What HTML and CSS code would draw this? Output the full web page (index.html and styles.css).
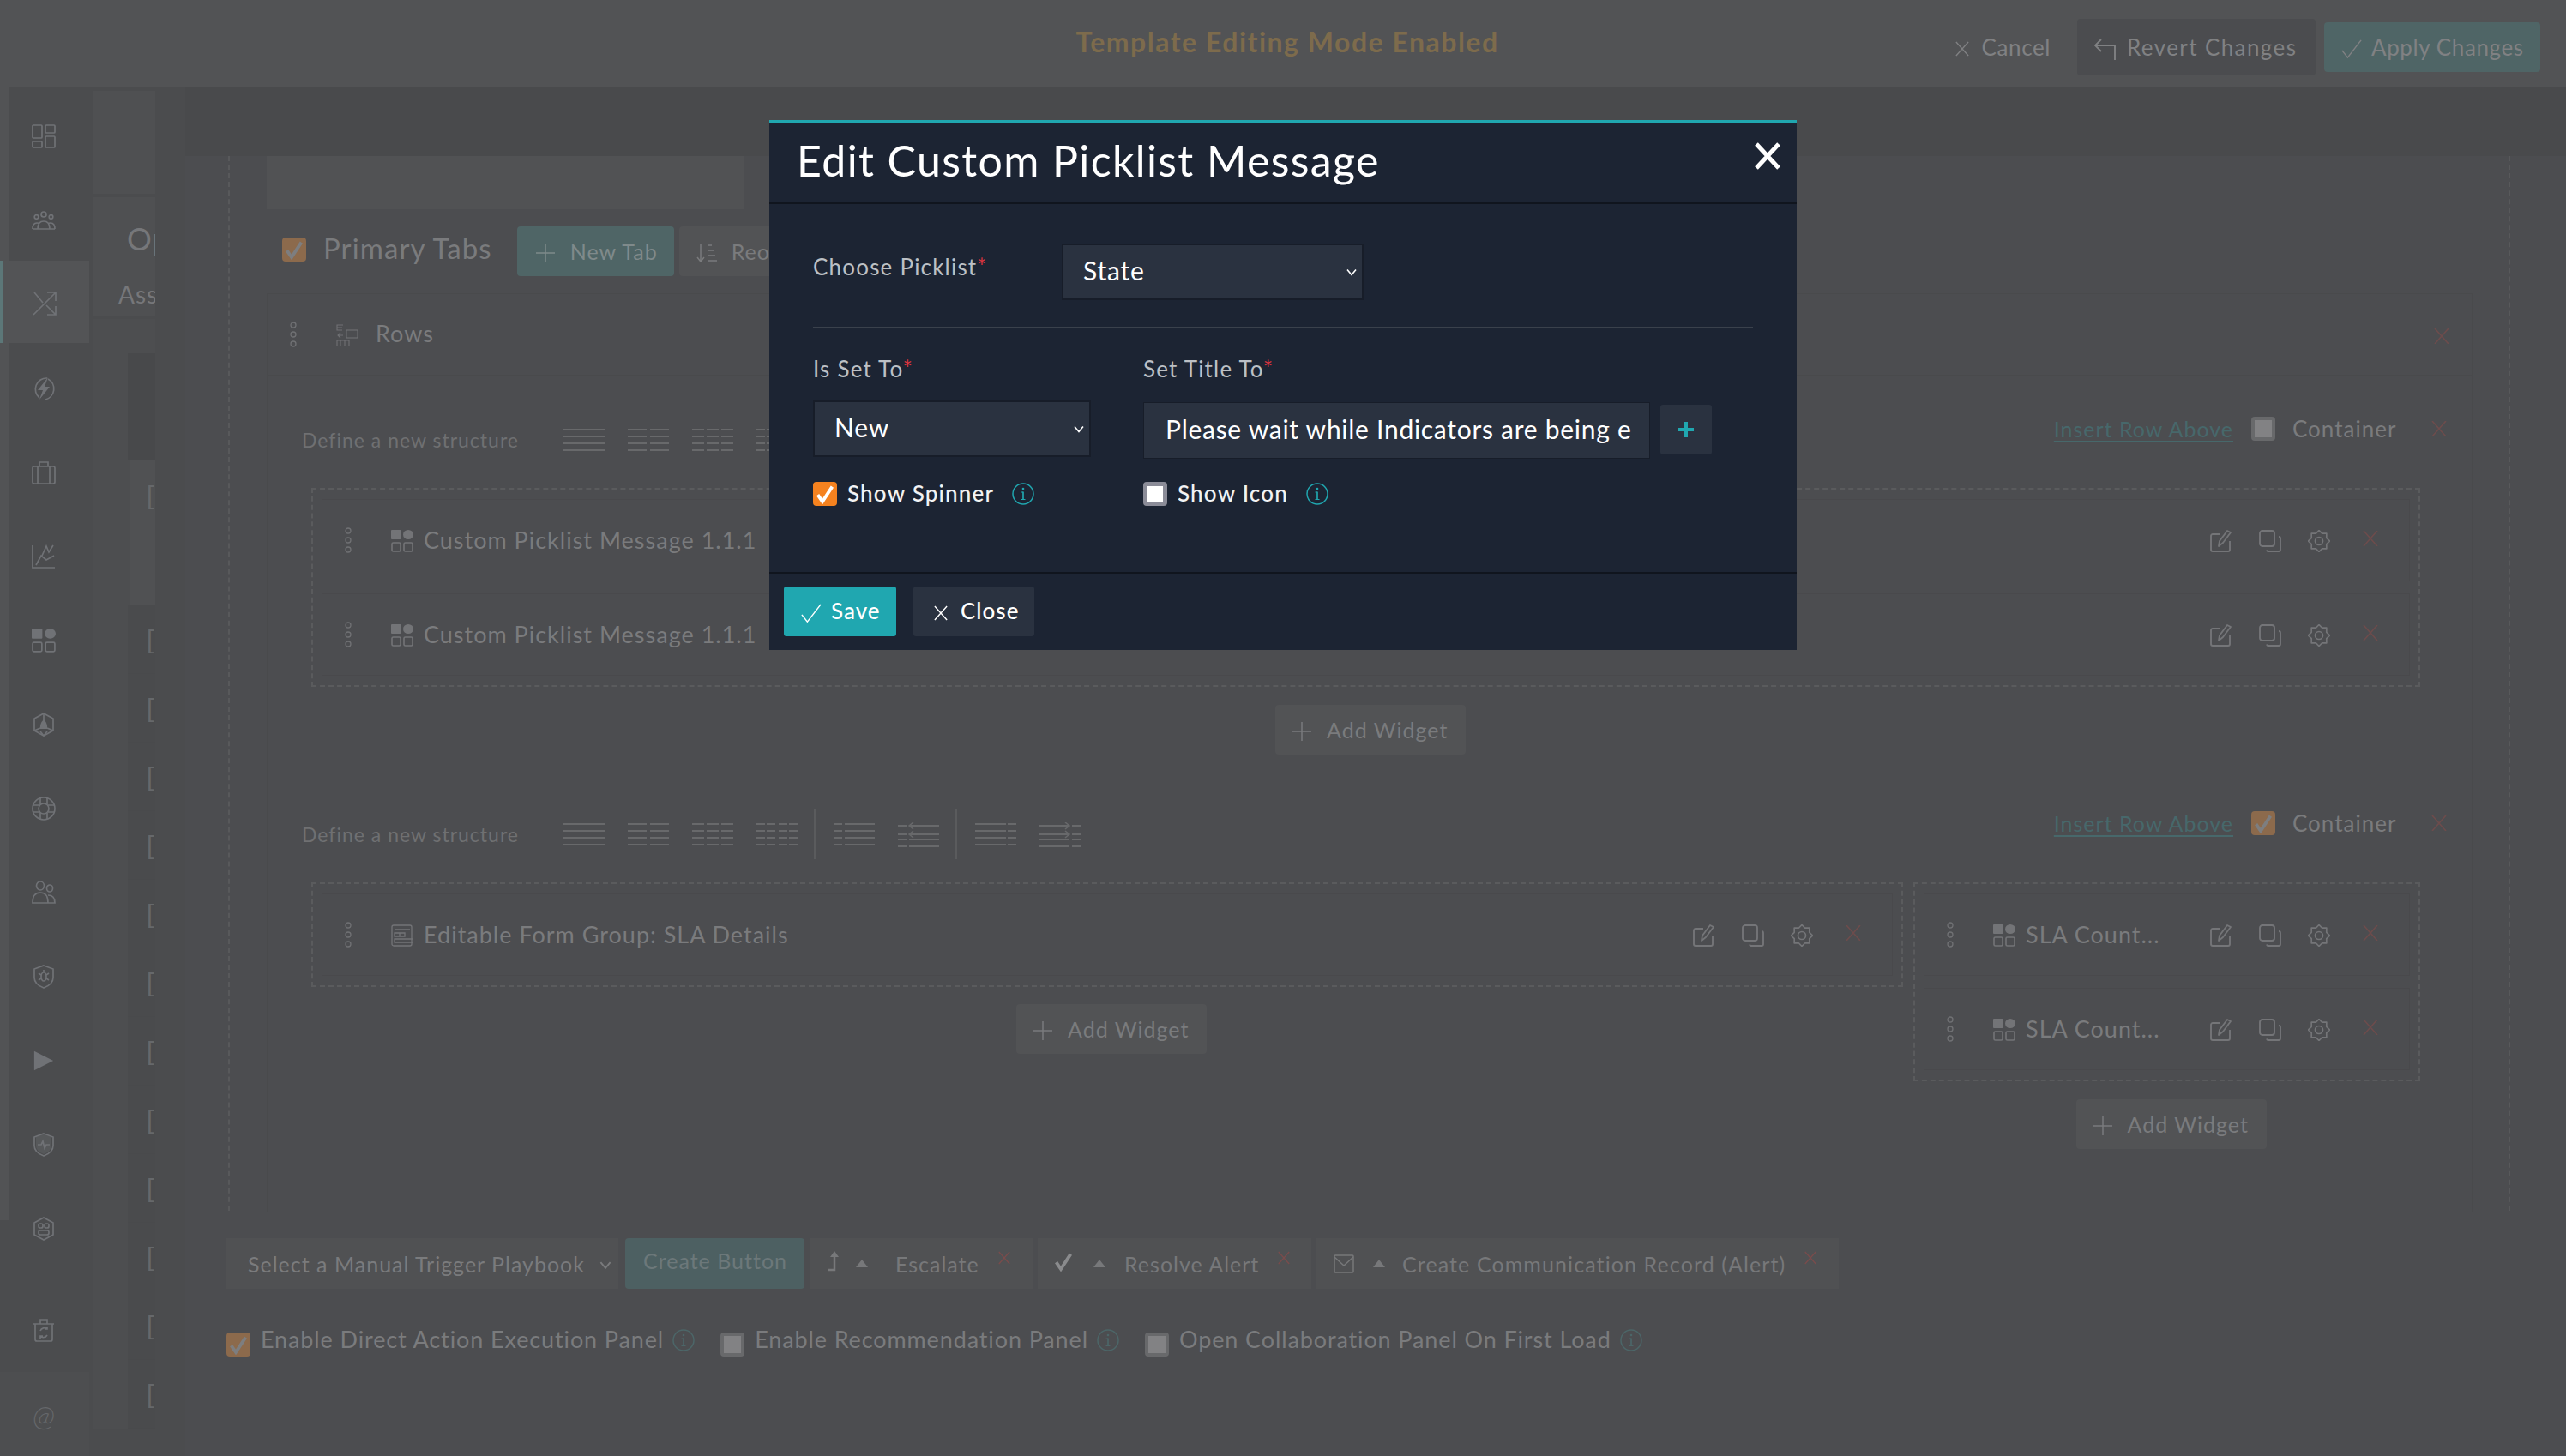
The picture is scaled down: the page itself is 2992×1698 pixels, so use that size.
FILE: index.html
```html
<!DOCTYPE html>
<html lang="en">
<head>
  <meta charset="UTF-8">
  <title>Template Editing Mode Enabled</title>
  <link rel="stylesheet" href="styles.css">
</head>
<body>

<!-- shared icons -->
<svg class="defs" width="0" height="0">
  <symbol id="i-widget" viewBox="0 0 26 26">
    <rect x="0" y="0" width="11.5" height="11" rx="1" fill="currentColor"/>
    <ellipse cx="20" cy="5.5" rx="6" ry="5.5" fill="currentColor"/>
    <rect x="1" y="15" width="10" height="10" rx="1.5" fill="none" stroke="currentColor" stroke-width="1.6"/>
    <rect x="15" y="15" width="10" height="10" rx="1.5" fill="none" stroke="currentColor" stroke-width="1.6"/>
  </symbol>
  <symbol id="i-dots" viewBox="0 0 12 30">
    <circle cx="6" cy="4" r="3" fill="none" stroke="currentColor" stroke-width="1.3"/>
    <circle cx="6" cy="15" r="3" fill="none" stroke="currentColor" stroke-width="1.3"/>
    <circle cx="6" cy="26" r="3" fill="none" stroke="currentColor" stroke-width="1.3"/>
  </symbol>
  <symbol id="i-edit" viewBox="0 0 26 26">
    <path d="M12 5H3a2 2 0 0 0-2 2v16a2 2 0 0 0 2 2h18a2 2 0 0 0 2-2V13" fill="none" stroke="currentColor" stroke-width="1.9"/>
    <path d="M10 19l1-6 9-12 4 2-9 12z" fill="none" stroke="currentColor" stroke-width="1.8" stroke-linejoin="round"/>
  </symbol>
  <symbol id="i-copy" viewBox="0 0 26 26">
    <rect x="1" y="1" width="17" height="18" rx="3" fill="none" stroke="currentColor" stroke-width="1.9"/>
    <path d="M23 8a2 2 0 0 1 2 2v13a2 2 0 0 1-2 2H11a2 2 0 0 1-2-1.500" fill="none" stroke="currentColor" stroke-width="1.9"/>
  </symbol>
  <symbol id="i-gear" viewBox="0 0 26 26">
    <path d="M13 .5l3.640 3.720 5.200-.06-.06 5.200L25.500 13l-3.720 3.640.06 5.200-5.200-.06L13 25.500l-3.640-3.720-5.200.06.06-5.200L.5 13l3.720-3.640-.06-5.200 5.200.06z" fill="none" stroke="currentColor" stroke-width="1.7" stroke-linejoin="round"/>
    <circle cx="13" cy="13" r="4.500" fill="none" stroke="currentColor" stroke-width="1.7"/>
  </symbol>
  <symbol id="i-x" viewBox="0 0 18 18">
    <path d="M1 0l16 18M17 0L1 18" fill="none" stroke="currentColor" stroke-width="1.6"/>
  </symbol>
  <symbol id="i-plus" viewBox="0 0 22 22">
    <path d="M11 0v22M0 11h22" fill="none" stroke="currentColor" stroke-width="1.500"/>
  </symbol>
  <symbol id="i-check" viewBox="0 0 26 24">
    <path d="M1 14l7 9L25 1" fill="none" stroke="currentColor" stroke-width="1.600"/>
  </symbol>
  <symbol id="i-info" viewBox="0 0 26 26">
    <circle cx="13" cy="13" r="12" fill="none" stroke="currentColor" stroke-width="1.500"/>
    <path d="M13 10.500v9" fill="none" stroke="currentColor" stroke-width="1.700"/>
    <path d="M10.500 11h2.500M10.500 19.500h5" fill="none" stroke="currentColor" stroke-width="1.200"/>
    <circle cx="13" cy="7" r="1.300" fill="currentColor"/>
  </symbol>
  <symbol id="i-tick" viewBox="0 0 20 20">
    <path d="M3 11l4.500 6.500L17 3" fill="none" stroke="currentColor" stroke-width="3.200"/>
  </symbol>
  <symbol id="i-chev" viewBox="0 0 12 8">
    <path d="M1 1l5 6 5-6" fill="none" stroke="currentColor" stroke-width="1.600"/>
  </symbol>
  <symbol id="i-s1" viewBox="0 0 48 26">
    <path d="M0 1h48M0 9h48M0 17h48M0 25h48" stroke="currentColor" stroke-width="2"/>
  </symbol>
  <symbol id="i-s2" viewBox="0 0 48 26">
    <path d="M0 1h22M26 1h22M0 9h22M26 9h22M0 17h22M26 17h22M0 25h22M26 25h22" stroke="currentColor" stroke-width="2"/>
  </symbol>
  <symbol id="i-s3" viewBox="0 0 48 26">
    <path d="M0 1h14M17 1h14M34 1h14M0 9h14M17 9h14M34 9h14M0 17h14M17 17h14M34 17h14M0 25h14M17 25h14M34 25h14" stroke="currentColor" stroke-width="2"/>
  </symbol>
  <symbol id="i-s4" viewBox="0 0 48 26">
    <path d="M0 1h10M12 1h10M26 1h10M38 1h10M0 9h10M12 9h10M26 9h10M38 9h10M0 17h10M12 17h10M26 17h10M38 17h10M0 25h10M12 25h10M26 25h10M38 25h10" stroke="currentColor" stroke-width="2"/>
  </symbol>
  <symbol id="i-s5" viewBox="0 0 48 26">
    <path d="M0 1h10M13 1h35M0 9h10M13 9h35M0 17h10M13 17h35M0 25h10M13 25h35" stroke="currentColor" stroke-width="2"/>
  </symbol>
  <symbol id="i-s6" viewBox="0 0 48 30">
    <path d="M0 4h10M13 4h35M0 14h10M13 14h35M0 20h10M13 20h35M0 28h10M13 28h35" fill="none" stroke="currentColor" stroke-width="2"/>
    <path d="M18 0l-5 4 5 4M18 10l-5 4 5 4" fill="none" stroke="currentColor" stroke-width="1.500"/>
  </symbol>
  <symbol id="i-s7" viewBox="0 0 48 26">
    <path d="M0 1h36M38 1h10M0 9h36M38 9h10M0 17h36M38 17h10M0 25h36M38 25h10" stroke="currentColor" stroke-width="2"/>
  </symbol>
  <symbol id="i-s8" viewBox="0 0 48 30">
    <path d="M0 4h35M38 4h10M0 14h35M38 14h10M0 20h35M38 20h10M0 28h35M38 28h10" fill="none" stroke="currentColor" stroke-width="2"/>
    <path d="M30 0l5 4-5 4M30 10l5 4-5 4" fill="none" stroke="currentColor" stroke-width="1.500"/>
  </symbol>
</svg>

<div class="app">

  <header class="topbar">
    <div></div>
    <div class="mode-title">Template Editing Mode Enabled</div>
    <div class="top-actions">
      <a class="top-cancel"><svg class="ic-x-sm"><use href="#i-x"/></svg>Cancel</a>
      <a class="btn-revert">
        <svg class="ic-revert" viewBox="0 0 26 26"><path d="M8 1L1 8l7 7M1 8h23v17" fill="none" stroke="currentColor" stroke-width="1.900"/></svg>
        Revert Changes
      </a>
      <a class="btn-apply"><svg class="ic-check"><use href="#i-check"/></svg>Apply Changes</a>
    </div>
  </header>

  <div class="shell">

    <aside class="rail">
      <div class="rail-strip"></div>
      <nav class="rail-nav">
        <a class="rail-item">
          <svg viewBox="0 0 28 28" fill="none" stroke="currentColor"><rect x="1" y="1" width="11" height="15" rx="1"/><rect x="16" y="1" width="11" height="9" rx="1"/><rect x="1" y="20" width="11" height="7" rx="1"/><rect x="16" y="14" width="11" height="13" rx="1"/></svg>
        </a>
        <a class="rail-item">
          <svg viewBox="0 0 28 28" fill="none" stroke="currentColor"><circle cx="14" cy="7" r="3"/><circle cx="5.500" cy="10" r="2.300"/><circle cx="22.500" cy="10" r="2.300"/><path d="M1 24q0-7 5-7 2 0 3 1M27 24q0-7-5-7-2 0-3 1M7 24q0-9 7-9t7 9M1 24h26"/></svg>
        </a>
        <a class="rail-item active">
          <svg viewBox="0 0 28 28" fill="none" stroke="currentColor"><path d="M1 27L27 1M17 1h10v10M2 1l10 12M16 16l11 11M27 17v10H17"/></svg>
        </a>
        <a class="rail-item">
          <svg viewBox="0 0 28 28" fill="none" stroke="currentColor"><path d="M9 25A13 13 0 0 1 18 2M19 3A13 13 0 0 1 16 27"/><path d="M19 1L7 16h6l-4 11 12-15h-6z" fill="currentColor" stroke="none"/></svg>
        </a>
        <a class="rail-item">
          <svg viewBox="0 0 28 28" fill="none" stroke="currentColor"><rect x="1" y="7" width="26" height="20" rx="2"/><path d="M9 7V2h10v5M7 7v20M21 7v20"/></svg>
        </a>
        <a class="rail-item">
          <svg viewBox="0 0 28 28" fill="none" stroke="currentColor"><path d="M1 1v26h26M5 24l6-11 6 5 9-5"/><path d="M12 13l5-11 3 7 5-8"/></svg>
        </a>
        <a class="rail-item"><svg><use href="#i-widget"/></svg></a>
        <a class="rail-item">
          <svg viewBox="0 0 28 28" fill="none" stroke="currentColor"><path d="M14 1l11 6v14l-11 6-11-6V7z"/><path d="M14 1v9M3 21l7-3M25 21l-7-3M14 27l-4-5M14 27l4-5"/><path d="M14 8q5 5 4 11h-8q-1-6 4-11z" fill="currentColor" stroke="none"/></svg>
        </a>
        <a class="rail-item">
          <svg viewBox="0 0 28 28" fill="none" stroke="currentColor"><circle cx="14" cy="14" r="13"/><circle cx="14" cy="14" r="6"/><path d="M10 2v7M18 2v7M10 19v7M18 19v7M2 10h7M2 18h7M19 10h7M19 18h7"/></svg>
        </a>
        <a class="rail-item">
          <svg viewBox="0 0 28 28" fill="none" stroke="currentColor"><ellipse cx="10" cy="6" rx="4.500" ry="5"/><ellipse cx="21" cy="9" rx="3.500" ry="4"/><path d="M1 26q0-12 9-12t9 12zM16 26h11q0-9-8-9"/></svg>
        </a>
        <a class="rail-item">
          <svg viewBox="0 0 28 28" fill="none" stroke="currentColor"><path d="M14 1l11 4v10q0 8-11 12Q3 23 3 15V5z"/><ellipse cx="14" cy="14" rx="3" ry="5"/><path d="M14 6v3M8 10l3 2M20 10l-3 2M8 18l3-2M20 18l-3-2"/></svg>
        </a>
        <a class="rail-item">
          <svg class="ic-play" viewBox="0 0 28 28"><path d="M1 1l26 13L1 27z" fill="currentColor"/></svg>
        </a>
        <a class="rail-item">
          <svg viewBox="0 0 28 28" fill="none" stroke="currentColor"><path d="M14 1l11 4v10q0 8-11 12Q3 23 3 15V5z"/><path d="M5 5l9-3 9 3v10q0 7-9 10-9-3-9-10z" fill="currentColor" fill-opacity=".35" stroke="none"/><path d="M7 14h4l2-4 2 8 2-4h4"/></svg>
        </a>
        <a class="rail-item">
          <svg viewBox="0 0 28 28" fill="none" stroke="currentColor"><path d="M14 1l11 6v14l-11 6-11-6V7z"/><rect x="8" y="8" width="5" height="5" rx="2"/><rect x="15" y="8" width="5" height="5" rx="2"/><rect x="8" y="16" width="12" height="5" rx="2"/></svg>
        </a>
        <a class="rail-item rail-recycle">
          <svg viewBox="0 0 28 28" fill="none" stroke="currentColor"><path d="M2 7h24M10 7V2h8v5M4 7v18a2 2 0 0 0 2 2h16a2 2 0 0 0 2-2V7"/><path d="M10 15a5 5 0 0 1 8-2M18 20a5 5 0 0 1-8 1M18 10v3h-3M10 24v-3h3"/></svg>
        </a>
        <a class="rail-item rail-at">@</a>
      </nav>
    </aside>

    <aside class="subnav">
      <div class="sub-panel sub-one"></div>
      <div class="sub-panel sub-two">
        <div class="sub-op">Op</div>
        <div class="sub-as">Ass</div>
      </div>
      <div class="sub-panel sub-list">
        <div class="sub-dark"></div>
        <div class="sub-item sub-current">[</div>
        <div class="sub-item">[</div>
        <div class="sub-item">[</div>
        <div class="sub-item">[</div>
        <div class="sub-item">[</div>
        <div class="sub-item">[</div>
        <div class="sub-item">[</div>
        <div class="sub-item">[</div>
        <div class="sub-item">[</div>
        <div class="sub-item">[</div>
        <div class="sub-item">[</div>
        <div class="sub-item">[</div>
        <div class="sub-item">[</div>
      </div>
    </aside>

    <main class="content">
      <div class="band"></div>

      <div class="canvas">
        <div class="tab-box">
          <div class="grey-block"></div>

          <div class="tabs-row">
            <span class="cb cb-on"><svg><use href="#i-tick"/></svg></span>
            <span class="tabs-title">Primary Tabs</span>
            <a class="btn-newtab"><svg class="ic-plus"><use href="#i-plus"/></svg>New Tab</a>
            <a class="btn-reorder">
              <svg class="ic-sort" viewBox="0 0 24 24" fill="none" stroke="currentColor" stroke-width="1.500"><path d="M5 2v20M1 17l4 5 4-5M14 3h4M14 9h6M14 15h8M14 21h10"/></svg>
              <span class="reorder-name">Reorder Tabs</span>
            </a>
          </div>

          <section class="rows-panel">
            <div class="rows-head">
              <svg class="ic-dots"><use href="#i-dots"/></svg>
              <svg class="ic-rows" viewBox="0 0 26 26" fill="none" stroke="currentColor" stroke-width="1.100"><path d="M8 1H1v6h6M1 4h6M8 13H2m3-3l-3 3 3 3M1 19h14v7H1zM5 19v7M10 19v7"/><rect x="12" y="7" width="13" height="9"/></svg>
              <span class="rows-name">Rows</span>
              <svg class="ic-del rows-del"><use href="#i-x"/></svg>
            </div>

            <!-- first row -->
            <div class="struct-head">
              <div class="struct-left">
                <span class="define">Define a new structure</span>
                <svg class="ic-s"><use href="#i-s1"/></svg>
                <svg class="ic-s"><use href="#i-s2"/></svg>
                <svg class="ic-s"><use href="#i-s3"/></svg>
                <svg class="ic-s"><use href="#i-s4"/></svg>
              </div>
              <div class="struct-right">
                <a class="insert">Insert Row Above</a>
                <span class="cb cb-off"></span>
                <span class="cont-label">Container</span>
                <svg class="ic-del"><use href="#i-x"/></svg>
              </div>
            </div>
            <div class="group">
              <div class="widget">
                <svg class="ic-dots"><use href="#i-dots"/></svg>
                <svg class="ic-widget"><use href="#i-widget"/></svg>
                <span class="widget-name">Custom Picklist Message 1.1.1</span>
                <div class="widget-tools">
                  <svg class="ic-tool"><use href="#i-edit"/></svg>
                  <svg class="ic-tool"><use href="#i-copy"/></svg>
                  <svg class="ic-tool"><use href="#i-gear"/></svg>
                  <svg class="ic-del"><use href="#i-x"/></svg>
                </div>
              </div>
              <div class="widget">
                <svg class="ic-dots"><use href="#i-dots"/></svg>
                <svg class="ic-widget"><use href="#i-widget"/></svg>
                <span class="widget-name">Custom Picklist Message 1.1.1</span>
                <div class="widget-tools">
                  <svg class="ic-tool"><use href="#i-edit"/></svg>
                  <svg class="ic-tool"><use href="#i-copy"/></svg>
                  <svg class="ic-tool"><use href="#i-gear"/></svg>
                  <svg class="ic-del"><use href="#i-x"/></svg>
                </div>
              </div>
            </div>
            <div class="add-line">
              <a class="btn-add"><svg class="ic-plus"><use href="#i-plus"/></svg>Add Widget</a>
            </div>

            <!-- second row -->
            <div class="struct-head">
              <div class="struct-left">
                <span class="define">Define a new structure</span>
                <svg class="ic-s"><use href="#i-s1"/></svg>
                <svg class="ic-s"><use href="#i-s2"/></svg>
                <svg class="ic-s"><use href="#i-s3"/></svg>
                <svg class="ic-s"><use href="#i-s4"/></svg>
                <span class="struct-sep"></span>
                <svg class="ic-s"><use href="#i-s5"/></svg>
                <svg class="ic-s ic-s-tall"><use href="#i-s6"/></svg>
                <span class="struct-sep"></span>
                <svg class="ic-s"><use href="#i-s7"/></svg>
                <svg class="ic-s ic-s-tall"><use href="#i-s8"/></svg>
              </div>
              <div class="struct-right">
                <a class="insert">Insert Row Above</a>
                <span class="cb cb-on"><svg><use href="#i-tick"/></svg></span>
                <span class="cont-label">Container</span>
                <svg class="ic-del"><use href="#i-x"/></svg>
              </div>
            </div>
            <div class="two-cols">
              <div class="col-wide">
                <div class="group">
                  <div class="widget">
                    <svg class="ic-dots"><use href="#i-dots"/></svg>
                    <svg class="ic-widget" viewBox="0 0 26 26" fill="none" stroke="currentColor" stroke-width="1.300"><path d="M3 1h19a2 2 0 0 1 2 2v20a2 2 0 0 1-2 2H3a2 2 0 0 1-2-2V3a2 2 0 0 1 2-2z"/><path d="M4 6h18M4 10h12v4H4zM10 10v4M4 17h22v4H4z"/></svg>
                    <span class="widget-name">Editable Form Group: SLA Details</span>
                    <div class="widget-tools">
                      <svg class="ic-tool"><use href="#i-edit"/></svg>
                      <svg class="ic-tool"><use href="#i-copy"/></svg>
                      <svg class="ic-tool"><use href="#i-gear"/></svg>
                      <svg class="ic-del"><use href="#i-x"/></svg>
                    </div>
                  </div>
                </div>
                <div class="add-line">
                  <a class="btn-add"><svg class="ic-plus"><use href="#i-plus"/></svg>Add Widget</a>
                </div>
              </div>
              <div class="col-narrow">
                <div class="group">
                  <div class="widget">
                    <svg class="ic-dots"><use href="#i-dots"/></svg>
                    <svg class="ic-widget"><use href="#i-widget"/></svg>
                    <span class="widget-name">SLA Count...</span>
                    <div class="widget-tools">
                      <svg class="ic-tool"><use href="#i-edit"/></svg>
                      <svg class="ic-tool"><use href="#i-copy"/></svg>
                      <svg class="ic-tool"><use href="#i-gear"/></svg>
                      <svg class="ic-del"><use href="#i-x"/></svg>
                    </div>
                  </div>
                  <div class="widget">
                    <svg class="ic-dots"><use href="#i-dots"/></svg>
                    <svg class="ic-widget"><use href="#i-widget"/></svg>
                    <span class="widget-name">SLA Count...</span>
                    <div class="widget-tools">
                      <svg class="ic-tool"><use href="#i-edit"/></svg>
                      <svg class="ic-tool"><use href="#i-copy"/></svg>
                      <svg class="ic-tool"><use href="#i-gear"/></svg>
                      <svg class="ic-del"><use href="#i-x"/></svg>
                    </div>
                  </div>
                </div>
                <div class="add-line">
                  <a class="btn-add"><svg class="ic-plus"><use href="#i-plus"/></svg>Add Widget</a>
                </div>
              </div>
            </div>
          </section>
        </div>
      </div>

      <div class="bottom">
        <div class="trigger-row">
          <div class="trigger-select">Select a Manual Trigger Playbook<svg class="ic-chev"><use href="#i-chev"/></svg></div>
          <a class="btn-create">Create Button</a>
          <div class="chip chip-escalate">
            <svg class="chip-icon" viewBox="0 0 14 24" fill="none" stroke="currentColor" stroke-width="2.500"><path d="M9 5v17H2"/><path d="M9 0l5 7H4z" fill="currentColor" stroke="none"/></svg>
            <span class="tri"></span>
            <span class="chip-name">Escalate</span>
            <svg class="chip-x"><use href="#i-x"/></svg>
          </div>
          <div class="chip chip-resolve">
            <svg class="chip-icon chip-tick"><use href="#i-tick"/></svg>
            <span class="tri"></span>
            <span class="chip-name">Resolve Alert</span>
            <svg class="chip-x"><use href="#i-x"/></svg>
          </div>
          <div class="chip chip-comm">
            <svg class="chip-icon chip-mail" viewBox="0 0 24 22" fill="none" stroke="currentColor" stroke-width="1.500"><rect x="1" y="1" width="22" height="20" rx="1"/><path d="M1 3l11 10L23 3"/></svg>
            <span class="tri"></span>
            <span class="chip-name">Create Communication Record (Alert)</span>
            <svg class="chip-x"><use href="#i-x"/></svg>
          </div>
        </div>
        <div class="option-row">
          <span class="cb cb-on"><svg><use href="#i-tick"/></svg></span>
          <span class="option-name">Enable Direct Action Execution Panel</span>
          <svg class="ic-info-dim"><use href="#i-info"/></svg>
          <span class="cb cb-off option-next"></span>
          <span class="option-name">Enable Recommendation Panel</span>
          <svg class="ic-info-dim"><use href="#i-info"/></svg>
          <span class="cb cb-off option-next"></span>
          <span class="option-name">Open Collaboration Panel On First Load</span>
          <svg class="ic-info-dim"><use href="#i-info"/></svg>
        </div>
      </div>
    </main>
  </div>
</div>

<!-- dialog -->
<div class="modal">
  <div class="modal-head">
    <h2 class="modal-title">Edit Custom Picklist Message</h2>
    <svg class="modal-close" viewBox="0 0 30 32"><path d="M2 2l26 28M28 2L2 30" fill="none" stroke="currentColor" stroke-width="5"/></svg>
  </div>
  <div class="modal-body">
    <div class="pick-row">
      <label class="field-label pick-label">Choose Picklist<i>*</i></label>
      <div class="select-wrap pick-select">
        <select><option>State</option></select>
        <svg class="sel-chev"><use href="#i-chev"/></svg>
      </div>
    </div>
    <div class="modal-rule"></div>
    <div class="form-cols">
      <div class="form-left">
        <label class="field-label">Is Set To<i>*</i></label>
        <div class="field-row">
          <div class="select-wrap new-select">
            <select><option>New</option></select>
            <svg class="sel-chev"><use href="#i-chev"/></svg>
          </div>
        </div>
        <div class="check-row">
          <span class="check check-on"><svg><use href="#i-tick"/></svg></span>
          <span class="check-name">Show Spinner</span>
          <svg class="ic-info"><use href="#i-info"/></svg>
        </div>
      </div>
      <div class="form-right">
        <label class="field-label">Set Title To<i>*</i></label>
        <div class="field-row">
          <input class="title-input" type="text" value="Please wait while Indicators are being e">
          <a class="btn-plus">
            <svg viewBox="0 0 18 18"><path d="M9 0v18M0 9h18" fill="none" stroke="currentColor" stroke-width="4"/></svg>
          </a>
        </div>
        <div class="check-row">
          <span class="check check-off"></span>
          <span class="check-name">Show Icon</span>
          <svg class="ic-info"><use href="#i-info"/></svg>
        </div>
      </div>
    </div>
  </div>
  <div class="modal-foot">
    <a class="btn-save"><svg class="ic-save"><use href="#i-check"/></svg><span class="foot-name">Save</span></a>
    <a class="btn-close"><svg class="ic-x-sm"><use href="#i-x"/></svg><span class="foot-name">Close</span></a>
  </div>
</div>

</body>
</html>
```

FILE: styles.css
```css
* {
  margin: 0;
  padding: 0;
  box-sizing: border-box;
}

body {
  width: 2992px;
  height: 1698px;
  overflow: hidden;
  background-color: #4c4d50;
  font-family: Lato, "Liberation Sans", sans-serif;
  font-size: 27px;
  letter-spacing: 1px;
  color: #7a7b7d;
}

svg {
  display: block;
  flex: none;
}

.defs {
  position: absolute;
}

.app {
  height: 1698px;
  display: flex;
  flex-direction: column;
}

/* top bar */
.topbar {
  height: 102px;
  flex: none;
  background-color: #525355;
  display: grid;
  grid-template-columns: 1fr auto 1fr;
  align-items: center;
}

.mode-title {
  margin-bottom: 6px;
  margin-left: 10px;
  font-size: 32px;
  font-weight: 700;
  color: #7d6b4c;
  letter-spacing: 1.5px;
}

.top-actions {
  display: flex;
  justify-content: flex-end;
  align-items: center;
  padding-top: 8px;
  padding-right: 30px;
  font-size: 26px;
  color: #808183;
}

.top-cancel {
  display: flex;
  align-items: center;
  margin-right: 31px;
  letter-spacing: .6px;
}

.ic-x-sm {
  width: 16px;
  height: 18px;
  margin-right: 15px;
  margin-top: 4px;
}

.btn-revert {
  width: 278px;
  height: 66px;
  margin-right: 10px;
  padding-left: 20px;
  background-color: #4b4c4f;
  border-radius: 4px;
  display: flex;
  align-items: center;
  letter-spacing: 1.4px;
}

.ic-revert {
  width: 26px;
  height: 26px;
  margin-right: 12px;
  margin-top: 6px;
}

.btn-apply {
  width: 252px;
  height: 58px;
  padding-left: 20px;
  background-color: #4f6566;
  border-radius: 4px;
  display: flex;
  align-items: center;
  letter-spacing: .6px;
}

.ic-check {
  width: 24px;
  height: 24px;
  margin-right: 11px;
  margin-top: 4px;
}

/* shell */
.shell {
  flex: 1;
  min-height: 0;
  display: flex;
}

.rail {
  width: 104px;
  flex: none;
  display: flex;
  align-items: flex-start;
  background-color: #4b4c4e;
}

.rail-strip {
  width: 10px;
  height: 1321px;
  flex: none;
  background-color: #525355;
}

.rail-nav {
  flex: 1;
  padding-top: 8px;
  color: #707276;
}

.rail-item {
  height: 98px;
  padding-right: 12px;
  display: flex;
  align-items: center;
  justify-content: center;
}

.rail-item svg {
  width: 28px;
  height: 28px;
  stroke-width: 1.700;
}

.rail-item.active {
  height: 96px;
  margin: -2px 0 4px -10px;
  padding: 4px 4px 0 0;
  background-color: #535456;
  border-left: 4px solid #5c7778;
}

.rail-item .ic-play {
  width: 24px;
  height: 26px;
}

.rail-recycle {
  margin-top: 20px;
}

.rail-at {
  margin-left: -10px;
  padding-right: 2px;
  background-color: #4d4e50;
  font-size: 34px;
  font-style: italic;
  font-weight: 300;
  letter-spacing: 0;
  color: #66686b;
}

/* second column */
.subnav {
  width: 112px;
  flex: none;
  padding: 4px 0 0 5px;
  display: flex;
  flex-direction: column;
  gap: 4px;
  overflow: hidden;
  background-color: #4b4c4e;
}

.sub-panel {
  width: 72px;
  flex: none;
  overflow: hidden;
  background-color: #4f5052;
}

.sub-one {
  height: 120px;
}

.sub-two {
  height: 138px;
  white-space: nowrap;
}

.sub-op {
  margin: 26px 0 0 39px;
  font-size: 36px;
  line-height: 44px;
  color: #76777a;
}

.sub-as {
  margin: 25px 0 0 29px;
  font-size: 28px;
  line-height: 36px;
  color: #76777a;
}

.sub-list {
  padding: 40px 0 0 40px;
  background-color: #4d4e50;
}

.sub-dark {
  height: 125px;
  background-color: #48494b;
}

.sub-item {
  height: 80px;
  padding-left: 22px;
  font-family: "Liberation Sans", sans-serif;
  font-size: 30px;
  line-height: 80px;
  color: #66686b;
  border-bottom: 1px solid #494a4c;
  background-color: #4a4b4d;
}

.sub-current {
  height: 169px;
  margin-left: 3px;
  padding-left: 19px;
  line-height: 82px;
  background-color: #505153;
}

/* main column */
.content {
  flex: 1;
  min-width: 0;
  display: flex;
  flex-direction: column;
}

.band {
  height: 80px;
  flex: none;
  background-color: #494a4c;
}

.canvas {
  height: 1231px;
  flex: none;
  overflow: hidden;
}

.tab-box {
  width: 2661px;
  min-height: 1231px;
  margin-left: 50px;
  padding-left: 43px;
  border-left: 2px dashed #58595b;
  border-right: 2px dashed #58595b;
}

.grey-block {
  width: 556px;
  height: 62px;
  background-color: #515254;
}

.tabs-row {
  height: 58px;
  margin-top: 20px;
  display: flex;
  align-items: center;
}

.cb {
  width: 28px;
  height: 28px;
  flex: none;
  border-radius: 4px;
  color: #7d7e80;
}

.cb svg {
  width: 24px;
  height: 24px;
  margin: 2px;
}

.cb-on {
  background-color: #8c6a4c;
}

.cb-off {
  background-color: #68696b;
  border: 4px solid #68696b;
  box-shadow: inset 0 0 0 20px #828284;
}

.tabs-row .cb {
  margin-left: 18px;
  margin-bottom: 4px;
}

.tabs-title {
  margin-left: 20px;
  margin-right: 29px;
  margin-bottom: 8px;
  font-size: 33px;
  letter-spacing: 1.1px;
}

.btn-newtab {
  width: 183px;
  height: 58px;
  padding-left: 22px;
  background-color: #4f6566;
  border-radius: 4px;
  display: flex;
  align-items: center;
  font-size: 25px;
  margin-right: 6px;
  color: #7f8a8b;
}

.ic-plus {
  width: 22px;
  height: 22px;
  margin-right: 18px;
  margin-top: 4px;
}

.btn-reorder {
  width: 300px;
  height: 58px;
  padding-left: 20px;
  background-color: #525355;
  border-radius: 4px;
  display: flex;
  align-items: center;
  font-size: 25px;
}

.reorder-name {
  white-space: nowrap;
}

.ic-sort {
  width: 24px;
  height: 24px;
  margin-right: 17px;
  margin-top: 4px;
}

/* rows */
.rows-panel {
  width: 2572px;
  min-height: 1100px;
  margin-top: 20px;
  border: 1px solid #494a4c;
}

.rows-head {
  height: 95px;
  padding-left: 24px;
  border-bottom: 1px solid #494a4c;
  display: flex;
  align-items: center;
}

.ic-dots {
  width: 12px;
  height: 30px;
  color: #707174;
}

.ic-rows {
  width: 26px;
  height: 26px;
  margin-left: 44px;
  margin-top: 2px;
  color: #707174;
}

.rows-name {
  margin-left: 20px;
  margin-bottom: 3px;
  font-size: 27px;
}

.ic-del {
  width: 18px;
  height: 18px;
  color: #6d4c4c;
}

.rows-del {
  margin-left: auto;
  margin-right: 26px;
  margin-top: 4px;
}

.struct-head {
  height: 131px;
  padding: 0 29px 0 40px;
  display: flex;
  justify-content: space-between;
  align-items: flex-start;
}

.struct-left {
  height: 30px;
  margin-top: 60px;
  display: flex;
  align-items: center;
}

.define {
  width: 305px;
  font-size: 23px;
  color: #6f7072;
  white-space: nowrap;
}

.ic-s {
  width: 48px;
  height: 26px;
  margin-right: 27px;
  color: #68696b;
}

.ic-s-tall {
  height: 30px;
  margin-top: 2px;
}

.struct-sep {
  width: 2px;
  height: 58px;
  margin: 0 21px 0 -8px;
  background-color: #5a5b5d;
}

.struct-right {
  margin-top: 46px;
  display: flex;
  align-items: center;
}

.insert {
  color: #47686b;
  font-size: 25px;
  text-decoration: underline;
  text-underline-offset: 4px;
}

.struct-right .cb {
  margin-left: 21px;
  margin-top: 0;
}

.cont-label {
  margin-left: 20px;
  width: 162px;
  font-size: 26px;
}

.group {
  margin-left: 51px;
  margin-right: 60px;
  padding: 11px 10px;
  border: 2px dashed #5a5b5d;
  display: flex;
  flex-direction: column;
  gap: 14px;
}

.widget {
  height: 96px;
  padding-left: 24px;
  padding-right: 36px;
  border: 1px solid #49494c;
  display: flex;
  align-items: center;
}

.ic-widget {
  width: 26px;
  height: 26px;
  margin-left: 44px;
  margin-top: 2px;
  color: #737477;
}

.widget-name {
  margin-left: 12px;
  margin-bottom: 2px;
  white-space: nowrap;
}

.widget-tools {
  margin-left: auto;
  padding-top: 2px;
  display: flex;
  align-items: center;
  gap: 31px;
  color: #747578;
}

.ic-tool {
  width: 26px;
  height: 26px;
}

.widget-tools .ic-del {
  margin-left: 7px;
  margin-top: -6px;
}

.add-line {
  height: 58px;
  margin: 21px 0 18px;
  padding-left: 2px;
  display: flex;
  justify-content: center;
}

.btn-add {
  width: 222px;
  padding-left: 20px;
  background-color: #525355;
  border-radius: 4px;
  display: flex;
  align-items: center;
  font-size: 25px;
}

.two-cols {
  display: flex;
}

.col-wide {
  width: 1907px;
  flex: none;
}

.col-wide .group {
  margin-right: 0;
}

.col-wide .add-line {
  margin-top: 20px;
  padding-left: 61px;
}

.col-narrow {
  flex: 1;
  min-width: 0;
  margin-left: 12px;
}

.col-narrow .group {
  margin-left: 0;
}

.col-narrow .add-line {
  margin-right: 60px;
  padding-left: 10px;
}

/* bottom bar */
.bottom {
  flex: 1;
  padding: 30px 0 0 48px;
  border-top: 1px solid #494a4c;
}

.trigger-row {
  height: 59px;
  display: flex;
  align-items: stretch;
  font-size: 25px;
  white-space: nowrap;
}

.trigger-select {
  width: 457px;
  padding-left: 25px;
  background-color: #505153;
  display: flex;
  align-items: center;
}

.ic-chev {
  width: 14px;
  height: 9px;
  margin-left: 17px;
  margin-top: 4px;
}

.btn-create {
  width: 209px;
  margin-left: 8px;
  padding: 11px 0 0 21px;
  background-color: #4d6062;
  border-radius: 4px;
  color: #6c787a;
}

.chip {
  margin-left: 6px;
  padding-left: 20px;
  background-color: #505153;
  display: flex;
  align-items: center;
  color: #77787a;
}

.chip-escalate {
  width: 260px;
}

.chip-resolve {
  width: 319px;
}

.chip-comm {
  width: 609px;
  letter-spacing: 1.1px;
}

.chip-icon {
  width: 14px;
  height: 24px;
  margin-top: -6px;
}

.chip-tick {
  width: 24px;
  margin-left: -2px;
  color: #8a8b8d;
}

.chip-mail {
  width: 24px;
  height: 22px;
  margin-top: 0;
}

.tri {
  width: 0;
  height: 0;
  margin-left: 20px;
  margin-right: 32px;
  border-left: 7px solid transparent;
  border-right: 7px solid transparent;
  border-bottom: 9px solid #77787a;
}

.chip-resolve .tri {
  margin-left: 23px;
  margin-right: 22px;
}

.chip-comm .tri {
  margin-left: 22px;
  margin-right: 20px;
}

.chip-x {
  width: 14px;
  height: 16px;
  margin-left: 22px;
  margin-top: -14px;
  color: #7a4c4c;
}

.option-row {
  margin-top: 51px;
  display: flex;
  align-items: flex-start;
  white-space: nowrap;
}

.option-name {
  margin-left: 12px;
  margin-top: -9px;
  line-height: 34px;
  letter-spacing: .88px;
}

.option-next {
  margin-left: 30px;
}

.ic-info-dim {
  width: 26px;
  height: 28px;
  margin-left: 10px;
  margin-top: -5px;
  color: #4c6668;
}

/* dialog */
.modal {
  position: absolute;
  left: 897px;
  top: 140px;
  width: 1198px;
  height: 618px;
  background-color: #1c2433;
  border-top: 4px solid #20a7b0;
  display: flex;
  flex-direction: column;
  color: #fff;
}

.modal-head {
  height: 94px;
  flex: none;
  padding: 0 19px 0 32px;
  border-bottom: 2px solid #10151e;
  display: flex;
  justify-content: space-between;
}

.modal-title {
  font-size: 50px;
  font-weight: 400;
  line-height: 86px;
  letter-spacing: 1.4px;
  white-space: nowrap;
}

.modal-close {
  width: 30px;
  height: 32px;
  margin-top: 22px;
}

.modal-body {
  flex: 1;
  padding: 46px 51px 0;
}

.pick-row {
  display: flex;
}

.field-label {
  display: block;
  height: 32px;
  font-size: 26px;
  line-height: 32px;
  letter-spacing: 1.2px;
  color: #bcc0c5;
  white-space: nowrap;
}

.field-label i {
  color: #e0353f;
  font-style: normal;
}

.pick-label {
  width: 290px;
  flex: none;
  margin-top: 11px;
}

.select-wrap {
  position: relative;
  height: 66px;
}

.select-wrap select {
  width: 100%;
  height: 100%;
  padding-left: 23px;
  padding-bottom: 5px;
  appearance: none;
  background-color: #2a3240;
  border: 2px solid #171d29;
  border-radius: 0;
  color: #fff;
  font-family: Lato, "Liberation Sans", sans-serif;
  font-size: 30px;
  letter-spacing: .8px;
}

.sel-chev {
  position: absolute;
  right: 8px;
  top: 29px;
  width: 12px;
  height: 9px;
  color: #fff;
}

.pick-select {
  width: 352px;
}

.new-select {
  width: 324px;
}

.modal-rule {
  height: 2px;
  margin-top: 31px;
  background-color: #3a414c;
}

.form-cols {
  margin-top: 31px;
  display: flex;
  gap: 61px;
}

.form-left {
  width: 324px;
  flex: none;
}

.form-right {
  flex: 1;
}

.field-row {
  height: 68px;
  margin-top: 21px;
  display: flex;
  gap: 12px;
}

.title-input {
  width: 591px;
  height: 66px;
  margin-top: 2px;
  padding: 0 20px 4px 25px;
  background-color: #2a3240;
  border: 1px solid #171d29;
  border-radius: 0;
  color: #fff;
  font-family: Lato, "Liberation Sans", sans-serif;
  font-size: 30px;
  letter-spacing: .72px;
  outline: none;
}

.btn-plus {
  width: 60px;
  height: 58px;
  margin-top: 5px;
  background-color: #2a3240;
  border-radius: 3px;
  display: flex;
  align-items: center;
  justify-content: center;
  color: #20a7b0;
}

.btn-plus svg {
  width: 18px;
  height: 18px;
}

.check-row {
  margin-top: 25px;
  display: flex;
  align-items: center;
}

.check {
  width: 28px;
  height: 28px;
  flex: none;
  border-radius: 4px;
  color: #fff;
}

.check svg {
  width: 24px;
  height: 24px;
  margin: 2px;
}

.check-on {
  background-color: #f5821f;
}

.check-off {
  background-color: #fff;
  border: 5px solid #8b8c98;
}

.check-name {
  margin-left: 12px;
  font-size: 26px;
  letter-spacing: 1.2px;
  font-weight: 500;
  color: #f2f3f4;
  position: relative;
  top: -1px;
}

.ic-info {
  width: 26px;
  height: 26px;
  margin-left: 21px;
  margin-top: -1px;
  color: #20a7b0;
}

.modal-foot {
  height: 91px;
  flex: none;
  padding: 15px 17px;
  border-top: 2px solid #10151e;
  display: flex;
  gap: 20px;
  font-size: 26px;
  font-weight: 500;
}

.foot-name {
  margin-bottom: 2px;
}

.btn-save {
  width: 131px;
  height: 58px;
  padding-left: 20px;
  background-color: #20a7b0;
  border-radius: 3px;
  display: flex;
  align-items: center;
}

.ic-save {
  width: 24px;
  height: 24px;
  margin-right: 11px;
  margin-top: 4px;
}

.btn-close {
  width: 141px;
  height: 58px;
  padding-left: 24px;
  background-color: #2a3240;
  border-radius: 3px;
  display: flex;
  align-items: center;
}
```
